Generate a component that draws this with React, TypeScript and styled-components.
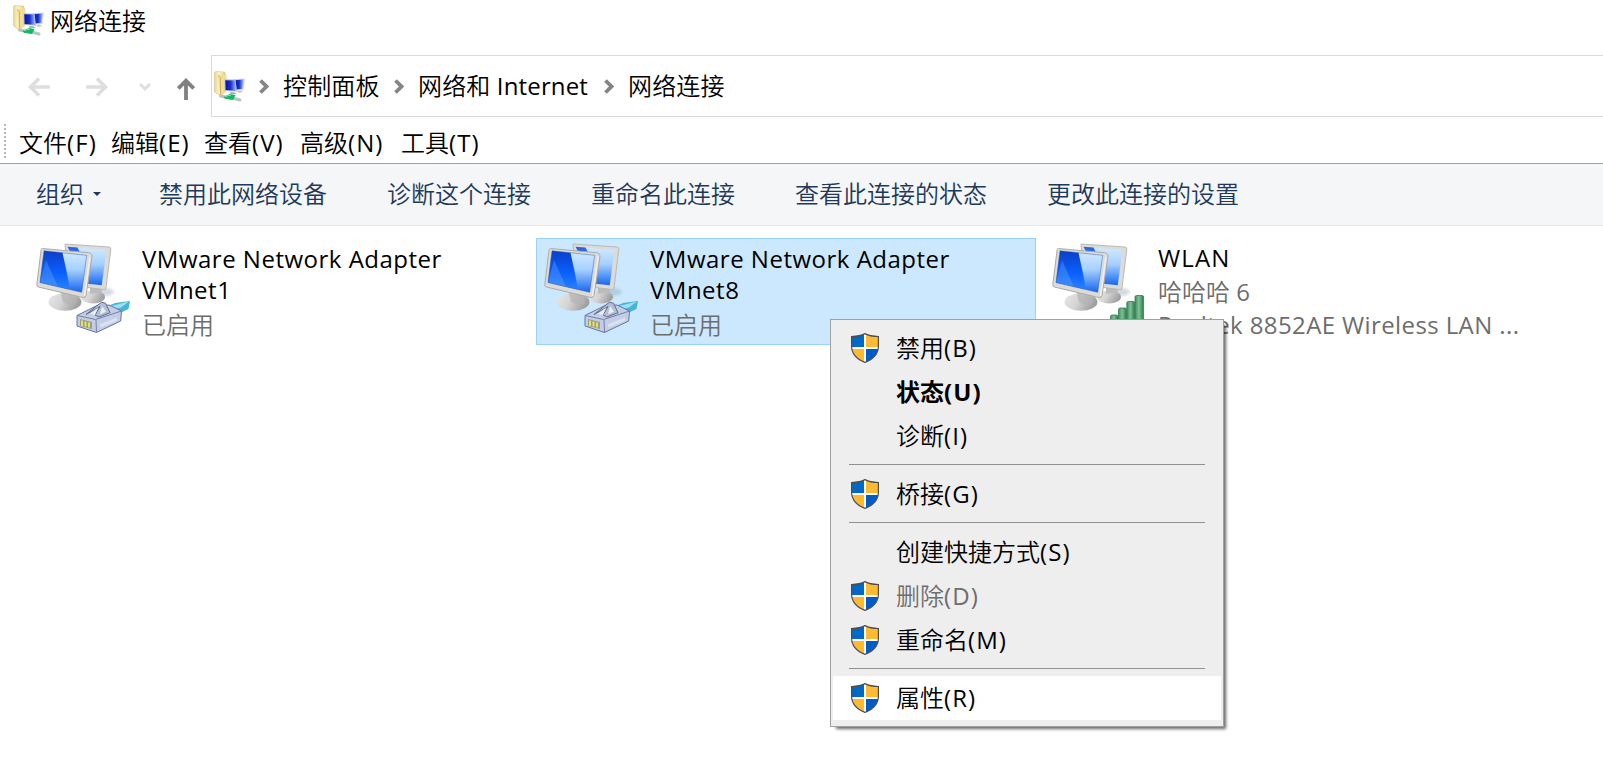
import React from 'react';
import styled, { createGlobalStyle, css } from 'styled-components';

const GlobalStyle = createGlobalStyle`
  *, *::before, *::after { box-sizing: border-box; }
  body {
    margin: 0;
    background: #fff;
    color: #000;
    font-family: 'Open Sans', 'Noto Sans CJK SC DemiLight', 'Noto Sans CJK SC', sans-serif;
    font-size: 24px;
    overflow: hidden;
  }
`;

const Window = styled.div`
  width: 100%;
  height: 779px;
  display: flex;
  flex-direction: column;
  overflow: hidden;
  white-space: nowrap;
`;

const TitleBar = styled.header`
  height: 55px;
  flex: none;
  display: flex;
  align-items: flex-start;
  gap: 6px;
  padding: 5px 0 0 13px;
`;

const Title = styled.span`
  line-height: 32px;
`;

const NavBar = styled.nav`
  height: 62px;
  flex: none;
  display: flex;
`;

const NavButtons = styled.div`
  width: 211px;
  flex: none;
  display: flex;
  padding: 21px 0 0 28px;
`;

const NavButton = styled.span<{ $gap: number }>`
  display: flex;
  margin-right: ${(p) => p.$gap}px;
`;

const AddressBar = styled.div`
  flex: 1;
  display: flex;
  align-items: center;
  border: 1px solid #d9d9d9;
  border-right: 0;
  padding-left: 2px;
`;

const Crumb = styled.span`
  display: flex;
  align-items: center;
`;

const CrumbLabel = styled.span<{ $width: number }>`
  width: ${(p) => p.$width}px;
  line-height: 32px;
  letter-spacing: 0.15px;
`;

const CrumbArrow = styled.svg`
  margin: 0 14px 0 14px;
`;

const MenuBar = styled.div`
  height: 46px;
  flex: none;
  display: flex;
  align-items: center;
  padding: 5px 0 0 4px;
`;

const Grip = styled.div`
  width: 2px;
  height: 34px;
  margin: 0 13px 4px 0;
  background: repeating-linear-gradient(#b8b8b8 0 2px, transparent 2px 4px);
`;

const MenuBarItem = styled.span<{ $width: number }>`
  width: ${(p) => p.$width}px;
  line-height: 32px;
`;

const AccessKey = styled.span`
  letter-spacing: 1.1px;
`;

const CommandBar = styled.div`
  height: 63px;
  flex: none;
  display: flex;
  align-items: center;
  padding: 0 0 1px 36px;
  background: #f5f6f7;
  border-top: 1px solid #a0a0a0;
  border-bottom: 1px solid #e6e7e8;
  color: #1e395b;
`;

const Command = styled.span<{ $gap: number }>`
  display: flex;
  align-items: center;
  margin-right: ${(p) => p.$gap}px;
  line-height: 32px;
`;

const Caret = styled.span`
  margin: 0 0 0 9px;
  border: 4px solid transparent;
  border-top-color: #1e395b;
  border-bottom: 0;
`;

const Content = styled.main`
  flex: 1;
  display: grid;
  grid-template-columns: repeat(3, 500px);
  grid-template-rows: 107px;
  column-gap: 8px;
  padding: 12px 0 0 28px;
`;

const Tile = styled.article<{ $selected?: boolean }>`
  display: flex;
  gap: 10px;
  padding: 1px 0 0 7px;
  border: 1px solid transparent;
  ${(p) =>
    p.$selected &&
    css`
      background: #cce8ff;
      border-color: #99d1ff;
    `}
`;

const TileText = styled.div`
  display: flex;
  flex-direction: column;
`;

const TileName = styled.span<{ $lines: number }>`
  width: 330px;
  padding: ${(p) => (p.$lines === 1 ? '2px 0' : '3px 0')};
  line-height: 31px;
  letter-spacing: ${(p) => (p.$lines === 1 ? 1.1 : 0.5)}px;
  white-space: normal;
`;

const TileDetail = styled.span`
  line-height: 33px;
  color: #6d6d6d;
`;

const LatinDetail = styled(TileDetail)`
  letter-spacing: 0.39px;
`;

const ContextMenu = styled.div`
  position: absolute;
  left: 830px;
  top: 319px;
  width: 394px;
  height: 408px;
  padding: 6px 2px;
  background: #eee;
  border: 1px solid #a0a0a0;
  box-shadow: 4px 4px 3px -2px rgba(0, 0, 0, 0.6);
`;

const MenuItem = styled.div<{ $hover?: boolean; $bold?: boolean; $disabled?: boolean }>`
  height: 44px;
  display: grid;
  grid-template-columns: 28px auto;
  column-gap: 17px;
  align-items: center;
  padding-left: 18px;
  background: ${(p) => (p.$hover ? '#fff' : 'transparent')};
  color: ${(p) => (p.$disabled ? '#6d6d6d' : '#000')};
  ${(p) =>
    p.$bold &&
    css`
      font-family: 'Open Sans', 'Noto Sans CJK SC', sans-serif;
      font-weight: 700;
    `}
`;

const MenuLabel = styled.span`
  grid-column: 2;
  line-height: 32px;
`;

const Separator = styled.div`
  height: 1px;
  margin: 6px 16px 7px;
  background: #919191;
`;

function ConnectionsIcon() {
  return (
    <svg width="31" height="31" viewBox="0 0 31 31">
      <defs>
        <linearGradient id="folder" x1="0" x2="1">
          <stop offset="0" stopColor="#ecd58a" />
          <stop offset=".4" stopColor="#fdf3c8" />
          <stop offset="1" stopColor="#e4c978" />
        </linearGradient>
        <linearGradient id="smallScreen" x1="0" x2="1">
          <stop offset="0" stopColor="#0713a0" />
          <stop offset=".5" stopColor="#1a31d0" />
          <stop offset="1" stopColor="#9fbcf8" />
        </linearGradient>
      </defs>
      <path d="M.5 1 3 .3l8 1v2l1 .5V20l-5.500 5L.5 21z" fill="url(#folder)" stroke="#dcc590" strokeWidth=".6" />
      <path d="M4 4.500 12 3.200V20l-6 5z" fill="#f0dd96" />
      <path d="m4 4.500 2.500 2V25" fill="none" stroke="#cfae5c" strokeWidth=".9" />
      <path d="m19.500 8.200 11.300-.7-1.500 11.500-9 .8z" fill="#c5d4ed" />
      <path d="m21 9.200 8.500-.7-1.200 9.300-6.500.6z" fill="url(#smallScreen)" />
      <path d="m23 20 4-.5 2 1.500-4 1z" fill="#c4c8cd" />
      <path d="m10.500 8.200 11 .3 1.500 12.300-12.500-1z" fill="#b4c3e4" />
      <path d="m11.300 9.200 9.500.3 1.300 10.200-10.500-.8z" fill="url(#smallScreen)" />
      <path d="m16 21 5 .5 1.500 1.500-6 0z" fill="#a7adb3" />
      <path d="m6.500 25 4 .8 10 1.700 5.500 1.500" fill="none" stroke="#b7c3c1" strokeWidth="3" strokeLinecap="round" />
      <path d="m9.500 26 6.500-3 5.500 1-2.500 5-8-1.300z" fill="#13b765" />
      <path d="m11 25.500 6-1.500" stroke="#7be8ad" />
    </svg>
  );
}

function AdapterIcon({ kind }: { kind: 'wired' | 'wireless' }) {
  return (
    <svg width="96" height="96" viewBox="0 0 96 96">
      <defs>
        <linearGradient id="shine" x1="0" y1="0" x2="0" y2="1">
          <stop offset="0" stopColor="#d3eaff" />
          <stop offset=".45" stopColor="#a6d0ff" />
          <stop offset="1" stopColor="#1766ef" />
        </linearGradient>
        <linearGradient id="deep" x1="0" y1="0" x2="0" y2="1">
          <stop offset="0" stopColor="#0a3fc8" />
          <stop offset=".6" stopColor="#0b62ff" />
          <stop offset="1" stopColor="#2d82ff" />
        </linearGradient>
        <linearGradient id="stand" x1="0" x2="1" y2=".3">
          <stop offset="0" stopColor="#e8e8e8" />
          <stop offset=".5" stopColor="#d4d4d4" />
          <stop offset="1" stopColor="#a0a0a0" />
        </linearGradient>
        <linearGradient id="bar" x1="0" y1="0" x2="1" y2="0">
          <stop offset="0" stopColor="#3f8c5d" />
          <stop offset=".45" stopColor="#7dc295" />
          <stop offset="1" stopColor="#2e794c" />
        </linearGradient>
        <filter id="soft" x="-20%" y="-20%" width="140%" height="140%">
          <feGaussianBlur stdDeviation="1.500" />
        </filter>
      </defs>
      <ellipse cx="68" cy="52" rx="10" ry="4" fill="#8fa1b0" opacity=".4" filter="url(#soft)" />
      <ellipse cx="57" cy="57" rx="12" ry="6.500" fill="url(#stand)" />
      <path d="M54 45h11l1 7-12 2z" fill="#bcbcbc" />
      <path d="M29 4 73 7q2 .2 1.800 2.400L70 48q-.3 2-2.500 1.500L32 45z" fill="#dcdbd7" stroke="#b4b4b1" strokeWidth=".9" />
      <path d="m31.500 6.700 38.800 3.200L65.800 45.300 35 42z" fill="url(#shine)" />
      <path d="m31.500 6.700 10 .8 3 6-9.500 0z" fill="#2a66e2" />
      <ellipse cx="29" cy="62" rx="16.500" ry="8.800" fill="url(#stand)" />
      <path d="M24 50 39 54l2 9q-8 3-14-1z" fill="#b3b3b3" opacity=".7" />
      <path d="m6.500 8.500 46 4.200q4 .5 3.400 4.500L50 55.500q-.5 2.500-3 2L2.300 47q-1.800-.5-1.500-2.500L5 10.500q.2-2 1.500-2z" fill="#dcdbd7" stroke="#ababa8" strokeWidth="1" />
      <path d="M54 16.500 48.500 56" stroke="#efefed" strokeWidth="1.500" />
      <path d="m8 10.800 42.700 4.500L45.700 52.300 4 42.600z" fill="url(#shine)" />
      <path d="m8 10.800 18.500 2Q31 32 34 49.500L4 42.600z" fill="url(#deep)" />
      <path d="m10 20 12 26.700-18-4.100z" fill="#79b5ff" opacity=".3" />
      <path d="m8 10.800 42.700 4.500L45.700 52.300 4 42.600z" fill="none" stroke="#2556b8" strokeWidth=".7" opacity=".65" />
      {kind === 'wired' ? (
        <g strokeLinejoin="round">
          <path d="m72 66 7-3 15-2-1.500 8L82 74z" fill="#45b4d5" />
          <path d="m75 66 18-4.500-8 6-7 2z" fill="#9be0f2" />
          <path d="m41 75.500 20-10 12-.5 12.500 6-.8 10L60.500 92.500 41 86z" fill="#c3cde6" stroke="#66769c" />
          <path d="m41 75.500 18.500 4L85.500 71" fill="none" stroke="#7481a6" />
          <path d="m60 80 .5 12.500" stroke="#7481a6" />
          <path d="m64 86 17-7" stroke="#e3eaf9" strokeWidth="3" opacity=".7" />
          <path d="M50 74.500 60.500 66l5-3.800 4 1 4.500 9.500L63 77l-4-2 5-8.500z" fill="#b3bed4" stroke="#5f6e88" />
          <path d="m54 74 8-6.500-3 7.500z" fill="#e8edf6" />
          <path d="m66 66 4 5.500-6 3z" fill="#e8edf6" />
          <path d="m44 79 12 3v7l-12-3z" fill="#9a9e8c" />
          <path d="m46 80.500v5.500m3.500-4.500v5m3.500-4v5" stroke="#ece45b" strokeWidth="1.900" />
        </g>
      ) : (
        <g fill="url(#bar)" stroke="#347b50" strokeWidth=".8">
          <rect x="58.500" y="75" width="7.500" height="18" rx="1.500" />
          <rect x="66.500" y="68" width="8" height="25" rx="1.500" />
          <rect x="74.800" y="61.500" width="8" height="32" rx="1.500" />
          <rect x="83" y="55.500" width="8.600" height="38" rx="1.500" />
        </g>
      )}
    </svg>
  );
}

function ShieldIcon() {
  return (
    <svg width="28" height="30" viewBox="0 0 28 30">
      <defs>
        <clipPath id="shieldShape">
          <path d="M14 .6C10 2.800 5 3.400 .6 3.500V13C.6 21 6.500 26.500 14 29.400 21.500 26.500 27.400 21 27.400 13V3.500C23 3.400 18 2.800 14 .6Z" />
        </clipPath>
      </defs>
      <g clipPath="url(#shieldShape)">
        <rect width="13" height="14" fill="#0069c8" />
        <rect x="15" width="13" height="14" fill="#ffba35" />
        <rect y="16" width="13" height="14" fill="#ffb92f" />
        <rect x="15" y="16" width="13" height="14" fill="#005bc5" />
        <path d="M14 0v30M0 15h28" stroke="#fff" strokeWidth="2" />
      </g>
      <path d="M14 .6C10 2.800 5 3.400 .6 3.500V13C.6 21 6.500 26.500 14 29.400 21.500 26.500 27.400 21 27.400 13V3.500C23 3.400 18 2.800 14 .6Z" fill="none" stroke="#4d4d4d" strokeWidth="1.200" />
    </svg>
  );
}

const crumbs = [
  { label: '控制面板', width: 97 },
  { label: '网络和 Internet', width: 172 },
  { label: '网络连接', width: 97 },
];

const menus = [
  { label: '文件', accessKey: '(F)', width: 92 },
  { label: '编辑', accessKey: '(E)', width: 93 },
  { label: '查看', accessKey: '(V)', width: 96 },
  { label: '高级', accessKey: '(N)', width: 101 },
  { label: '工具', accessKey: '(T)', width: 90 },
];

const commands = [
  { label: '禁用此网络设备', gap: 60 },
  { label: '诊断这个连接', gap: 60 },
  { label: '重命名此连接', gap: 60 },
  { label: '查看此连接的状态', gap: 60 },
  { label: '更改此连接的设置', gap: 0 },
];

type Entry = {
  label: string;
  accessKey: string;
  shield?: boolean;
  bold?: boolean;
  disabled?: boolean;
  hover?: boolean;
} | null;

const entries: Entry[] = [
  { label: '禁用', accessKey: '(B)', shield: true },
  { label: '状态', accessKey: '(U)', bold: true },
  { label: '诊断', accessKey: '(I)' },
  null,
  { label: '桥接', accessKey: '(G)', shield: true },
  null,
  { label: '创建快捷方式', accessKey: '(S)' },
  { label: '删除', accessKey: '(D)', shield: true, disabled: true },
  { label: '重命名', accessKey: '(M)', shield: true },
  null,
  { label: '属性', accessKey: '(R)', shield: true, hover: true },
];

export default function App() {
  return (
    <Window>
      <GlobalStyle />
      <TitleBar>
        <ConnectionsIcon />
        <Title>网络连接</Title>
      </TitleBar>
      <NavBar>
        <NavButtons>
          <NavButton $gap={36}>
            <svg width="22" height="22" viewBox="0 0 22 22" fill="none" stroke="#dedede" strokeWidth="3.600">
              <path d="M22 11H3M11 2.500 2.500 11l8.500 8.500" />
            </svg>
          </NavButton>
          <NavButton $gap={31}>
            <svg width="22" height="22" viewBox="0 0 22 22" fill="none" stroke="#dedede" strokeWidth="3.600">
              <path d="M0 11h19M11 2.500l8.500 8.500-8.500 8.500" />
            </svg>
          </NavButton>
          <NavButton $gap={26}>
            <svg width="12" height="22" viewBox="0 0 12 22" fill="none" stroke="#dedede" strokeWidth="3">
              <path d="m1 8 5 5 5-5" />
            </svg>
          </NavButton>
          <NavButton $gap={0}>
            <svg width="18" height="24" viewBox="0 0 18 24" fill="none" stroke="#808080" strokeWidth="3.800">
              <path d="M9 24V5M1.300 12.500 9 4.800l7.700 7.700" />
            </svg>
          </NavButton>
        </NavButtons>
        <AddressBar>
          <ConnectionsIcon />
          {crumbs.map((c) => (
            <Crumb key={c.label}>
              <CrumbArrow width="10" height="15" viewBox="0 0 10 15" fill="none" stroke="#858585" strokeWidth="3.800">
                <path d="m1.500 1.500 6 6-6 6" />
              </CrumbArrow>
              <CrumbLabel $width={c.width}>{c.label}</CrumbLabel>
            </Crumb>
          ))}
        </AddressBar>
      </NavBar>
      <MenuBar>
        <Grip />
        {menus.map((m) => (
          <MenuBarItem key={m.label} $width={m.width}>
            {m.label}
            <AccessKey>{m.accessKey}</AccessKey>
          </MenuBarItem>
        ))}
      </MenuBar>
      <CommandBar>
        <Command $gap={58}>
          组织
          <Caret />
        </Command>
        {commands.map((c) => (
          <Command key={c.label} $gap={c.gap}>
            {c.label}
          </Command>
        ))}
      </CommandBar>
      <Content>
        <Tile>
          <AdapterIcon kind="wired" />
          <TileText>
            <TileName $lines={2}>VMware Network Adapter VMnet1</TileName>
            <TileDetail>已启用</TileDetail>
          </TileText>
        </Tile>
        <Tile $selected>
          <AdapterIcon kind="wired" />
          <TileText>
            <TileName $lines={2}>VMware Network Adapter VMnet8</TileName>
            <TileDetail>已启用</TileDetail>
          </TileText>
        </Tile>
        <Tile>
          <AdapterIcon kind="wireless" />
          <TileText>
            <TileName $lines={1}>WLAN</TileName>
            <TileDetail>哈哈哈 6</TileDetail>
            <LatinDetail>Realtek 8852AE Wireless LAN ...</LatinDetail>
          </TileText>
        </Tile>
      </Content>
      <ContextMenu>
        {entries.map((e, i) =>
          e ? (
            <MenuItem key={i} $hover={e.hover} $bold={e.bold} $disabled={e.disabled}>
              {e.shield && <ShieldIcon />}
              <MenuLabel>
                {e.label}
                <AccessKey>{e.accessKey}</AccessKey>
              </MenuLabel>
            </MenuItem>
          ) : (
            <Separator key={i} />
          ),
        )}
      </ContextMenu>
    </Window>
  );
}
